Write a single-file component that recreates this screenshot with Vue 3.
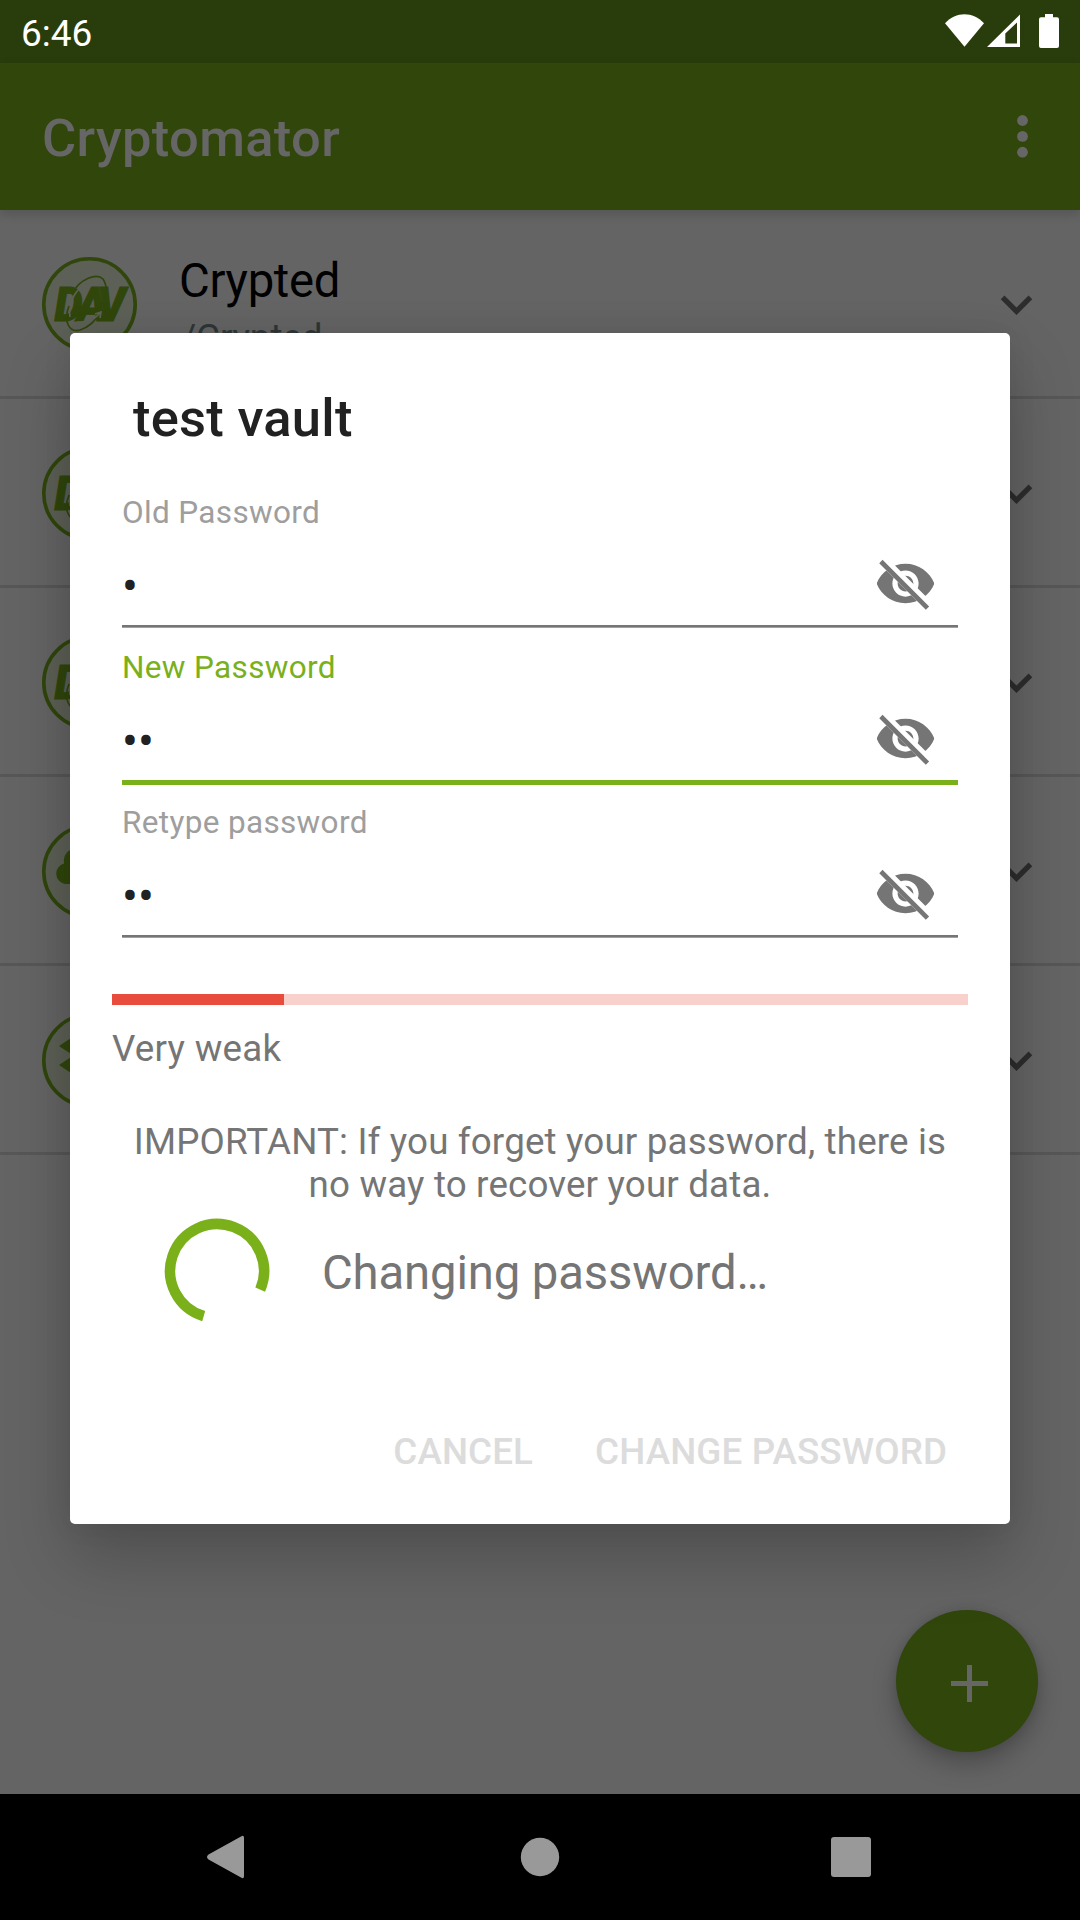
<script setup>
const vaults = [
  { name: 'Crypted', path: '/Crypted', icon: 'dav' },
  { name: '', path: '', icon: 'dav' },
  { name: '', path: '', icon: 'dav' },
  { name: '', path: '', icon: 'cloud' },
  { name: '', path: '', icon: 'box' },
]
const fields = [
  { label: 'Old Password', value: '•', active: false },
  { label: 'New Password', value: '••', active: true },
  { label: 'Retype password', value: '••', active: false },
]
</script>

<template>
  <div class="screen">
    <header class="status">
      <span class="time">6:46</span>
      <svg class="status-icons" width="116" height="36" viewBox="944 13 116 36" fill="#fff">
        <path d="M945 23.3C956 11.2 973 11.2 984 23.3L964.5 46.7Z" />
        <path fill-rule="evenodd" d="M987 47L1020 14.5V47ZM1005.3 43.6H1017V22.4L1005.3 33.4Z" />
        <path d="M1045 14h8v3.3h4q2 0 2 2v26.700q0 2-2 2h-16q-2 0-2-2v-26.700q0-2 2-2h4z" />
      </svg>
    </header>

    <div class="appbar">
      <h1>Cryptomator</h1>
      <svg class="more" width="12" height="44" viewBox="0 0 12 44" fill="#666">
        <circle cx="6.500" cy="6.500" r="5.4" /><circle cx="6.500" cy="22.400" r="5.4" /><circle cx="6.500" cy="38.200" r="5.4" />
      </svg>
    </div>

    <main class="list">
      <div v-for="(v, i) in vaults" :key="i" class="vault">
        <svg class="badge" width="96" height="96" viewBox="0 0 96 96">
          <circle cx="48.500" cy="48.500" r="45.700" fill="#5d6056" stroke="#30460b" stroke-width="3.6" />
          <template v-if="v.icon === 'dav'">
            <text y="65.500" x="14.500 39 60" transform="scale(.93 1)" class="dav">DAV</text>
            <g fill="none" stroke-width="1.700">
              <path stroke="#5d6056" d="M29 61C26 45 38 26 55 24" />
              <path stroke="#30460b" d="M31 38C39 22 56 17 62 23C66 29 66 38 61 48M28 50C22 65 28 77 39 74C48 71 53 66 59 57" />
              <path stroke="#5d6056" d="M36 66C45 67 53 64 59 57M54 58l6-2-1 6" />
            </g>
          </template>
          <path v-else-if="v.icon === 'cloud'" fill="#30460b" d="M24 61a10.500 10.500 0 0 1-1-20.500a13 13 0 0 1 16-15a20 20 0 0 1 33 16a10 10 0 0 1 1 19.500z" />
          <path v-else fill="#30460b" d="M18 34l15-10 15 10-15 10zM48 34l15-10 15 10-15 10zM18 53l15-10 15 10-15 10zM48 53l15-10 15 10-15 10zM33 66l15-10 15 10-15 10z" />
        </svg>
        <div class="names">
          <div class="name">{{ v.name }}</div>
          <div class="path">{{ v.path }}</div>
        </div>
        <svg class="chevron" width="63" height="63" viewBox="0 0 24 24" fill="#2d2d2d">
          <path d="M7.41 8.590L12 13.170l4.590-4.580L18 10l-6 6-6-6z" />
        </svg>
      </div>
    </main>

    <button class="fab">
      <svg width="37" height="37" viewBox="0 0 37 37" fill="#666"><path d="M16 0h5v16h16v5H21v16h-5V21H0v-5h16z" /></svg>
    </button>

    <section class="dialog">
      <h2>test vault</h2>
      <div v-for="f in fields" :key="f.label" class="field" :class="{ active: f.active }">
        <label>{{ f.label }}</label>
        <div class="input">
          <span class="dots">{{ f.value }}</span>
          <svg width="63" height="63" viewBox="0 0 24 24">
            <clipPath id="cut"><path d="M2 4.270L19.730 22L22.270 19.460L4.540 1.730V1H23V23H1V4.270Z" /></clipPath>
            <path clip-path="url(#cut)" fill="#757575" fill-rule="evenodd" d="M12 4.500C7 4.500 2.730 7.610 1 12c1.730 4.390 6 7.500 11 7.500s9.270-3.110 11-7.500c-1.730-4.390-6-7.500-11-7.500zM12 17c-2.760 0-5-2.240-5-5s2.240-5 5-5 5 2.240 5 5-2.240 5-5 5zM12 9c-1.660 0-3 1.340-3 3s1.340 3 3 3 3-1.340 3-3-1.340-3-3-3z" />
            <path d="M3.270 4.270L19.740 20.740" stroke="#757575" stroke-width="1.800" stroke-linecap="square" />
          </svg>
        </div>
        <div class="line"></div>
      </div>
      <div class="meter"><div class="level"></div></div>
      <p class="strength">Very weak</p>
      <p class="hint">IMPORTANT: If you forget your password, there is<br />no way to recover your data.</p>
      <div class="progress">
        <svg width="106" height="106" viewBox="-53 -53 106 106" fill="none" stroke="#7ab01a" stroke-width="10.500">
          <path d="M-13.300 45.100A47 47 0 1 1 43.200 18.700" />
        </svg>
        <span>Changing password…</span>
      </div>
      <div class="actions">
        <button>CANCEL</button>
        <button>CHANGE PASSWORD</button>
      </div>
    </section>

    <nav class="nav">
      <svg width="1080" height="126" viewBox="0 0 1080 126" fill="#999">
        <path d="M241 42.500Q244 40.500 244 44V82Q244 85.500 241 83.500L208.500 65.500Q205.500 63 208.500 60.500Z" />
        <circle cx="540" cy="63" r="19.200" />
        <rect x="831" y="43" width="40" height="40" rx="3" />
      </svg>
    </nav>
  </div>
</template>

<style>
body { margin: 0; }
</style>

<style scoped>
.screen {
  position: relative;
  width: 1080px;
  height: 1920px;
  overflow: hidden;
  display: flex;
  flex-direction: column;
  background: #646464;
  font-family: Roboto, "Noto Sans", sans-serif;
}
h1, h2, p { margin: 0; }
button { border: 0; background: none; padding: 0; font-family: inherit; }
svg { display: block; flex: none; }

.status {
  height: 63px;
  display: flex;
  justify-content: space-between;
  box-sizing: border-box;
  padding: 0 20px 0 21px;
  background: #293c0b;
  color: #fff;
}
.time { font-size: 37px; line-height: 68px; }
.status-icons { margin-top: 13px; }

.appbar {
  position: relative;
  height: 147px;
  display: flex;
  justify-content: space-between;
  padding: 0 52px 0 42px;
  background: #30460b;
  box-shadow: 0 4px 10px rgba(0, 0, 0, .16);
}
.appbar h1 { font-size: 52.500px; font-weight: 500; line-height: 151px; letter-spacing: .33px; color: #666; }
.more { margin-top: 51px; }

.list { flex: 1; }
.vault {
  display: flex;
  align-items: center;
  height: 186px;
  border-bottom: 3px solid #575757;
  padding: 0 32px 0 41px;
}
.badge { margin-top: 2px; }
.dav { font: italic 900 48px Roboto, sans-serif; fill: #30460b; stroke: #30460b; stroke-width: 1px; }
.names { flex: 1; margin-left: 42px; padding-top: 7px; }
.name { font-size: 47.250px; line-height: 55px; letter-spacing: -.3px; color: #000; }
.path { margin-top: 7px; font-size: 36.750px; line-height: 43px; color: #2f3638; padding-left: 2px; letter-spacing: -.1px; }
.chevron { margin-top: 2px; }

.fab {
  position: absolute;
  left: 896px;
  top: 1610px;
  width: 142px;
  height: 142px;
  border-radius: 50%;
  background: #30460b;
  box-shadow: 0 12px 24px rgba(0, 0, 0, .25), 0 0 10px rgba(0, 0, 0, .1);
}
.fab svg { margin: 4px 0 0 55px; }

.dialog {
  position: absolute;
  left: 70px;
  top: 333px;
  width: 940px;
  height: 1191px;
  box-sizing: border-box;
  padding: 54px 42px 0;
  border-radius: 5px;
  background: #fff;
  box-shadow: 0 34px 66px rgba(0, 0, 0, .21), 0 0 30px rgba(0, 0, 0, .07);
}
h2 { margin: 0 0 24px 21px; font-size: 52.500px; font-weight: 500; line-height: 62px; letter-spacing: .25px; color: #212121; }
.field { height: 155px; box-sizing: border-box; padding: 20.500px 10px 0; }
.field label { display: block; height: 37px; font-size: 31.500px; line-height: 37px; letter-spacing: .34px; color: #9e9e9e; }
.input {
  height: 94.500px;
  box-sizing: border-box;
  padding: 21px 21px 0 0;
  display: flex;
  justify-content: space-between;
}
.dots { font-size: 47.250px; line-height: 70px; color: #212121; }
.line { height: 2px; background: #757575; border-bottom: 1px solid #a0a0a0; }
.active label { color: #7ab01a; }
.active .line { height: 5px; border: 0; background: #7ab01a; }
.meter { height: 11px; margin-top: 56px; background: #f8d0cc; }
.level { width: 172px; height: 11px; background: #e74c3c; }
.strength { margin-top: 22px; font-size: 36.750px; line-height: 43px; letter-spacing: .25px; color: #757575; }
.hint { margin-top: 50px; font-size: 36.750px; line-height: 43px; letter-spacing: .155px; color: #757575; text-align: center; }
.progress { display: flex; align-items: center; margin: 12px 0 0 52px; font-size: 47.250px; color: #757575; }
.progress span { margin: 4px 0 0 52px; line-height: 56px; letter-spacing: -.13px; }
.actions { display: flex; justify-content: flex-end; gap: 62px; margin-top: 106px; padding-right: 21px; }
.actions button { font-size: 36.750px; font-weight: 500; line-height: 43px; letter-spacing: .12px; color: #dcdcdc; }

.nav { position: relative; height: 126px; background: #000; }
</style>
